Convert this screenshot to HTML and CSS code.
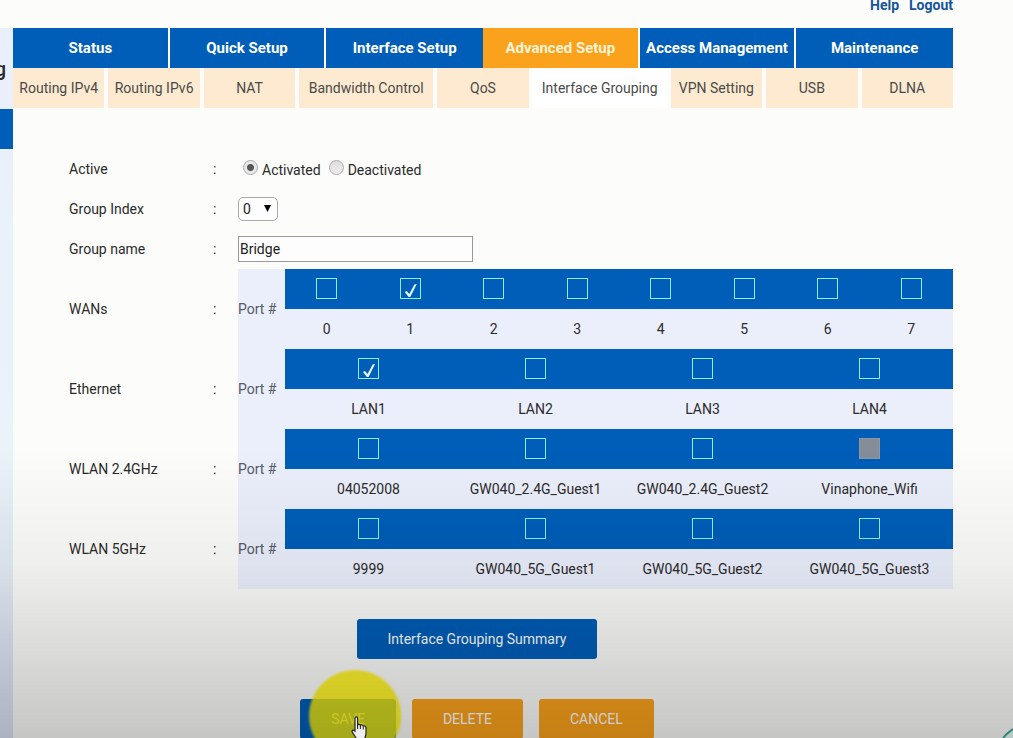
FILE: index.html
```html
<!DOCTYPE html>
<html lang="en">
<head>
  <meta charset="UTF-8">
  <meta name="viewport" content="width=device-width, initial-scale=1.0">
  <title>Interface Grouping</title>
  <link rel="stylesheet" href="styles.css">
</head>
<body>
  <div class="page">
    <aside class="sidebar">
      <div class="sidebar-title">g</div>
      <div class="sidebar-current"></div>
    </aside>

    <main class="main">
      <div class="top-links">
        <a href="#">Help</a>
        <a href="#">Logout</a>
      </div>

      <nav class="tabs">
        <a href="#">Status</a>
        <a href="#">Quick Setup</a>
        <a href="#" class="no-gap">Interface Setup</a>
        <a href="#" class="active">Advanced Setup</a>
        <a href="#">Access Management</a>
        <a href="#" class="no-gap">Maintenance</a>
      </nav>

      <nav class="subtabs">
        <a href="#">Routing IPv4</a>
        <a href="#">Routing IPv6</a>
        <a href="#">NAT</a>
        <a href="#" class="wide">Bandwidth Control</a>
        <a href="#">QoS</a>
        <a href="#" class="wide active">Interface Grouping</a>
        <a href="#">VPN Setting</a>
        <a href="#">USB</a>
        <a href="#">DLNA</a>
      </nav>

      <form class="group-form">
        <div class="row">
          <span>Active</span>
          <span>:</span>
          <div class="radios">
            <input type="radio" name="active" id="activated" checked>
            <label for="activated">Activated</label>
            <input type="radio" name="active" id="deactivated">
            <label for="deactivated">Deactivated</label>
          </div>
        </div>

        <div class="row">
          <label for="groupIndex">Group Index</label>
          <span>:</span>
          <div class="select-box">
            <select id="groupIndex">
              <option>0</option>
            </select>
            <svg class="arrow" viewBox="0 0 7 7"><path d="M0 0h7L3.5 7z"/></svg>
          </div>
        </div>

        <div class="row">
          <label for="groupName">Group name</label>
          <span>:</span>
          <div><input type="text" class="text-input" id="groupName" value="Bridge"></div>
        </div>

        <!-- Port tables -->
        <div class="row">
          <span>WANs</span>
          <span>:</span>
          <div class="ports">
            <span class="port-title">Port #</span>
            <label class="port"><span class="port-check"><input type="checkbox"></span>0</label>
            <label class="port"><span class="port-check"><input type="checkbox" checked></span>1</label>
            <label class="port"><span class="port-check"><input type="checkbox"></span>2</label>
            <label class="port"><span class="port-check"><input type="checkbox"></span>3</label>
            <label class="port"><span class="port-check"><input type="checkbox"></span>4</label>
            <label class="port"><span class="port-check"><input type="checkbox"></span>5</label>
            <label class="port"><span class="port-check"><input type="checkbox"></span>6</label>
            <label class="port"><span class="port-check"><input type="checkbox"></span>7</label>
          </div>
        </div>

        <div class="row">
          <span>Ethernet</span>
          <span>:</span>
          <div class="ports">
            <span class="port-title">Port #</span>
            <label class="port"><span class="port-check"><input type="checkbox" checked></span>LAN1</label>
            <label class="port"><span class="port-check"><input type="checkbox"></span>LAN2</label>
            <label class="port"><span class="port-check"><input type="checkbox"></span>LAN3</label>
            <label class="port"><span class="port-check"><input type="checkbox"></span>LAN4</label>
          </div>
        </div>

        <div class="row">
          <span>WLAN 2.4GHz</span>
          <span>:</span>
          <div class="ports">
            <span class="port-title">Port #</span>
            <label class="port"><span class="port-check"><input type="checkbox"></span>04052008</label>
            <label class="port"><span class="port-check"><input type="checkbox"></span>GW040_2.4G_Guest1</label>
            <label class="port"><span class="port-check"><input type="checkbox"></span>GW040_2.4G_Guest2</label>
            <label class="port"><span class="port-check"><input type="checkbox" disabled></span>Vinaphone_Wifi</label>
          </div>
        </div>

        <div class="row">
          <span>WLAN 5GHz</span>
          <span>:</span>
          <div class="ports">
            <span class="port-title">Port #</span>
            <label class="port"><span class="port-check"><input type="checkbox"></span>9999</label>
            <label class="port"><span class="port-check"><input type="checkbox"></span>GW040_5G_Guest1</label>
            <label class="port"><span class="port-check"><input type="checkbox"></span>GW040_5G_Guest2</label>
            <label class="port"><span class="port-check"><input type="checkbox"></span>GW040_5G_Guest3</label>
          </div>
        </div>

        <div class="actions">
          <button type="button" class="btn">Interface Grouping Summary</button>
        </div>
        <div class="actions">
          <div class="save-box">
            <button type="submit" class="btn">SAVE</button>
            <div class="click-spot"></div>
          </div>
          <button type="button" class="btn btn-orange">DELETE</button>
          <button type="button" class="btn btn-orange">CANCEL</button>
        </div>
      </form>
    </main>
  </div>

  <div class="shade"></div>
  <svg class="pointer" viewBox="0 0 18 24">
    <path d="M4 2.200C4 .3 6.600.3 6.600 2.200V9c.6-1 2.600-.8 2.800.5.800-1 2.700-.6 2.900.8 1-.7 2.700-.1 2.700 1.500V17c0 3-1.200 4-1.500 7H6c-.3-2-2.800-4.500-4.500-7.500C.3 14.500 2 13 4 15z" fill="#eee" stroke="#222" stroke-width="1.200"/>
    <path d="M6.600 9v4M9.400 10v3M12.300 11v2.500" fill="none" stroke="#222"/>
  </svg>
  <svg class="corner" viewBox="0 0 12 10">
    <path d="M2 10Q6 5 12 1V10z" fill="#b9cbc7"/>
    <path d="M2 10Q6 5 12 1" fill="none" stroke="#2f8573" stroke-width="2"/>
  </svg>
</body>
</html>
```
FILE: styles.css
```css
html {
  overflow: hidden;
}

body {
  margin: 0;
  font-family: Roboto, "Liberation Sans", sans-serif;
  font-size: 14px;
  line-height: 20px;
  color: #2b2b2b;
  background-color: #fcfcfa;
}

a {
  text-decoration: none;
}

.page {
  display: flex;
  min-height: 100vh;
}

/* Left menu */
.sidebar {
  width: 13px;
  margin-top: 28px;
  overflow: hidden;
  background: linear-gradient(#e9effc, #e9f3f8 60%, #dce2f5);
}

.sidebar-title {
  display: flex;
  align-items: center;
  justify-content: flex-end;
  width: 6px;
  height: 81px;
  font-size: 20px;
  font-weight: 500;
}

.sidebar-current {
  height: 40px;
  background-color: #005eb8;
}

.main {
  flex: 1;
  margin-right: 60px;
}

.top-links {
  display: flex;
  justify-content: flex-end;
  gap: 10px;
  height: 28px;
  line-height: 10px;
}

.top-links a {
  color: #15559b;
  font-weight: bold;
}

/* Main tabs */
.tabs {
  display: grid;
  grid-template-columns: repeat(6, 1fr);
}

.tabs a {
  border-right: 2px solid #fff;
  background-color: #005eb8;
  color: #fff;
  font-size: 15px;
  font-weight: bold;
  line-height: 40px;
  text-align: center;
  white-space: nowrap;
}

.tabs .no-gap {
  border-right: none;
}

.tabs .active {
  background-color: #faa21b;
  color: #fff3d8;
}

.subtabs {
  display: flex;
  gap: 4px;
}

.subtabs a {
  flex: 1 1 0;
  background-color: #fdead0;
  color: #4a4a4a;
  line-height: 40px;
  text-align: center;
  white-space: nowrap;
}

.subtabs .wide {
  flex: 0 0 134px;
}

.subtabs .active {
  background-color: #fff;
}

/* Form */
.group-form {
  padding-top: 41px;
}

.row {
  display: grid;
  grid-template-columns: 144px 25px 1fr;
  align-items: center;
  min-height: 40px;
  padding-left: 56px;
}

.radios {
  display: flex;
  align-items: center;
  gap: 4px;
  padding-left: 5px;
}

.radios label {
  padding-top: 2px;
  margin-right: 4px;
}

.radios input {
  appearance: none;
  width: 15px;
  height: 15px;
  margin: 0 0 3px;
  border: 1px solid #aaa;
  border-radius: 50%;
  background: linear-gradient(#ddd, #eee);
}

.radios input:checked {
  background: radial-gradient(circle, #555 3px, #e8e8e8 4px);
}

.select-box {
  position: relative;
  display: flex;
  width: 40px;
}

.select-box select {
  appearance: none;
  width: 100%;
  height: 24px;
  padding: 0 4px;
  border: 1px solid #aaa;
  border-radius: 5px;
  background-color: #fdfdfd;
  color: #222;
  font: inherit;
}

.arrow {
  position: absolute;
  top: 8px;
  right: 7px;
  width: 7px;
  height: 7px;
  pointer-events: none;
}

.text-input {
  display: block;
  box-sizing: border-box;
  width: 235px;
  height: 26px;
  padding: 0 1px;
  border: 1px solid #999;
  background-color: #fdfdfd;
  color: #222;
  font: inherit;
}

.ports {
  display: flex;
  align-items: center;
  background-color: #ebeffc;
}

.port-title {
  width: 47px;
  color: #555a66;
}

.port {
  flex: 1 1 0;
  line-height: 40px;
  text-align: center;
}

.port-check {
  display: flex;
  align-items: center;
  justify-content: center;
  height: 39px;
  padding-bottom: 1px;
  background-color: #005eb8;
}

.port-check input {
  appearance: none;
  width: 21px;
  height: 21px;
  margin: 0;
  border: 1px solid #8ff0f0;
}

.port-check input:checked::after {
  content: "";
  display: block;
  width: 12px;
  height: 13px;
  margin: 5px 4px;
  background-color: #e2fbff;
  clip-path: polygon(0 62%, 16% 54%, 38% 76%, 80% 4%, 100% 0, 46% 100%, 32% 100%);
}

.port-check input:disabled {
  border-color: #8c98a6;
  background-color: #858d99;
}

/* Buttons */
.actions {
  display: flex;
  justify-content: center;
  gap: 16px;
  padding-top: 30px;
  padding-right: 12px;
}

.actions + .actions {
  padding-top: 40px;
}

.btn {
  height: 40px;
  padding: 0 31px;
  border: none;
  border-radius: 3px;
  background-color: #005eb8;
  color: #fff;
  font: inherit;
  cursor: pointer;
}

.btn-orange {
  background-color: #faa21b;
}

.save-box {
  position: relative;
}

/* Yellow highlight around the pointer */
.click-spot {
  position: absolute;
  top: -29px;
  left: 9px;
  width: 92px;
  height: 92px;
  border-radius: 50%;
  background-color: rgba(255, 240, 0, 0.82);
  filter: blur(1px);
  pointer-events: none;
}

.shade {
  position: fixed;
  right: 0;
  bottom: 0;
  left: 0;
  height: 290px;
  background: linear-gradient(transparent, rgba(0, 0, 0, 0.05) 40%, rgba(0, 0, 0, 0.21));
  pointer-events: none;
}

.pointer {
  position: fixed;
  top: 716px;
  left: 351px;
  width: 18px;
  height: 24px;
  pointer-events: none;
}

.corner {
  position: fixed;
  right: 0;
  bottom: 0;
  width: 12px;
  height: 10px;
}
```
